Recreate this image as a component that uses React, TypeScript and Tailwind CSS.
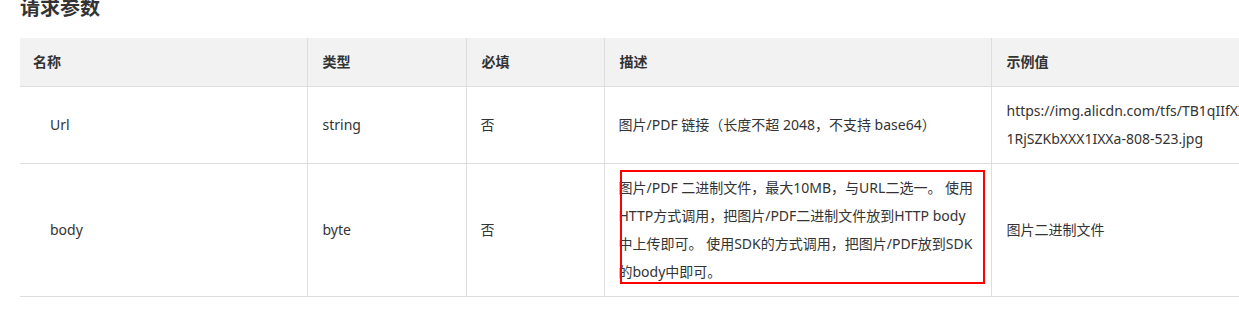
const font = { fontFamily: '"Noto Sans", "Noto Sans CJK SC", sans-serif' };

type Row = {
  name: string;
  type: string;
  required: string;
  desc: string[];
  example: string[];
  marked?: boolean;
};

const rows: Row[] = [
  {
    name: "Url",
    type: "string",
    required: "否",
    desc: ["图片/PDF 链接（长度不超 2048，不支持 base64）"],
    example: ["https://img.alicdn.com/tfs/TB1qIIfXXXXXXX0", "1RjSZKbXXX1IXXa-808-523.jpg"],
  },
  {
    name: "body",
    type: "byte",
    required: "否",
    desc: [
      "图片/PDF 二进制文件，最大10MB，与URL二选一。 使用",
      "HTTP方式调用，把图片/PDF二进制文件放到HTTP body",
      "中上传即可。 使用SDK的方式调用，把图片/PDF放到SDK",
      "的body中即可。",
    ],
    example: ["图片二进制文件"],
    marked: true,
  },
];

const headers = ["名称", "类型", "必填", "描述", "示例值"];

export default function App() {
  return (
    <div className="w-[1239px] h-[316px] overflow-hidden bg-white text-[#333]" style={font}>
      <div className="flex flex-col pl-[20px] h-[38px]">
        <h2 className="text-[20px] leading-[28px] font-bold text-[#333] -mt-[6px]">请求参数</h2>
      </div>
      <div className="pl-[20px]">
        <table className="table-fixed border-collapse w-[1300px] text-[14px] leading-[28px]">
          <colgroup>
            <col className="w-[287px]" />
            <col className="w-[159px]" />
            <col className="w-[138px]" />
            <col className="w-[387px]" />
            <col className="w-[329px]" />
          </colgroup>
          <thead>
            <tr className="bg-[#f2f2f2]">
              {headers.map((h, i) => (
                <th
                  key={h}
                  className={`text-left font-semibold text-[#333] py-[10px] border-b border-[#dedede] ${
                    i === 0 ? "pl-[13px]" : "pl-[15px] border-l"
                  }`}
                >
                  {h}
                </th>
              ))}
            </tr>
          </thead>
          <tbody>
            {rows.map((r) => (
              <tr key={r.name} className="border-b border-[#dedede]">
                <td className="pl-[30px] py-[10px] align-middle">{r.name}</td>
                <td className="pl-[15px] py-[10px] border-l border-[#dedede]">{r.type}</td>
                <td className="pl-[14px] py-[10px] border-l border-[#dedede]">{r.required}</td>
                <td className="relative pl-[14px] pr-[8px] py-[10px] border-l border-[#dedede]">
                  {r.desc.map((line) => (
                    <div key={line} className="whitespace-nowrap">
                      {line}
                    </div>
                  ))}
                  {r.marked && (
                    <div className="absolute left-[15px] top-[6px] w-[365px] h-[114px] border-2 border-[#f00] pointer-events-none" />
                  )}
                </td>
                <td className="pl-[15px] py-[10px] border-l border-[#dedede]">
                  {r.example.map((line) => (
                    <div key={line} className="whitespace-nowrap">
                      {line}
                    </div>
                  ))}
                </td>
              </tr>
            ))}
          </tbody>
        </table>
      </div>
    </div>
  );
}
